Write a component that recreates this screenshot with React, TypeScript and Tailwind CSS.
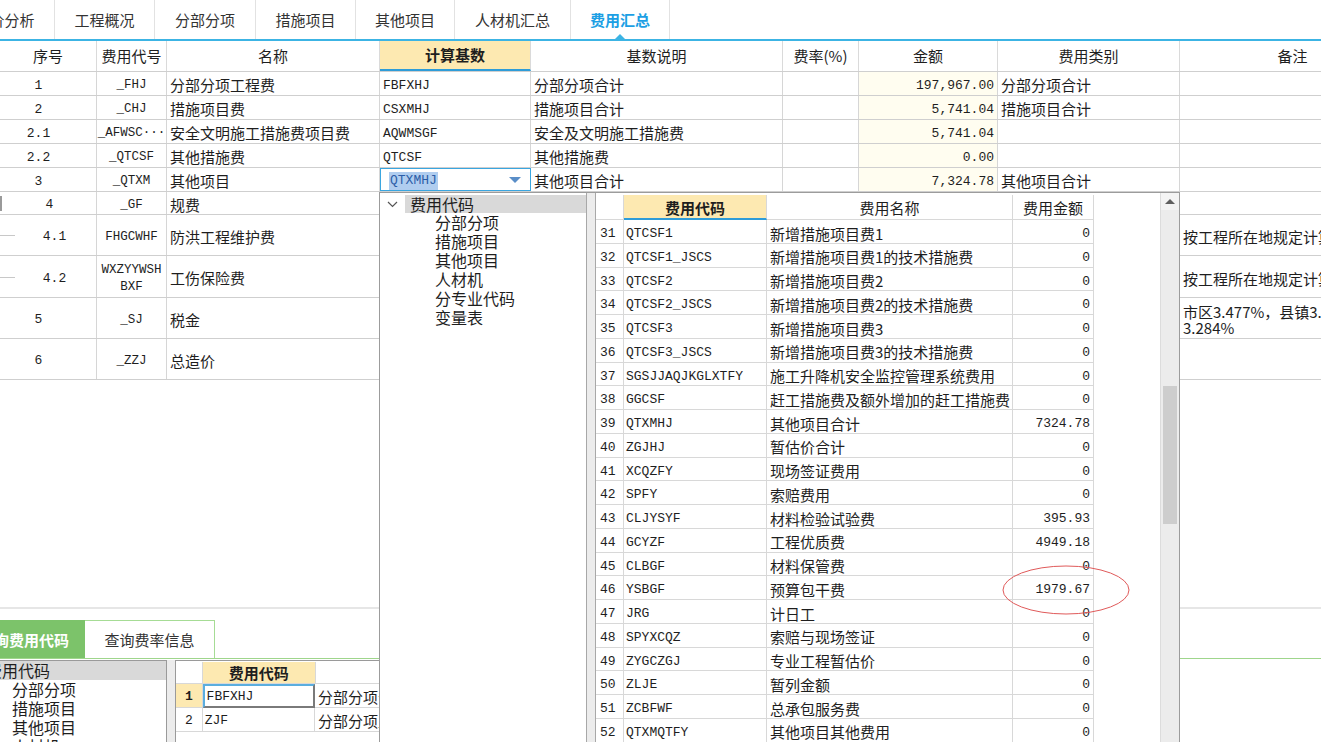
import React from 'react';

const CJK = "font-['Noto_Sans_CJK_SC',sans-serif]";
const MONO = "font-['Liberation_Mono','Noto_Sans_CJK_SC',monospace]";
// ref text sits a little low in its cells
const SHIFT = 'pt-[4px]';

const tabs = [
  { label: '造价分析', w: 'w-[100px] -ml-[45px]' },
  { label: '工程概况', w: 'w-[100px]' },
  { label: '分部分项', w: 'w-[101px]' },
  { label: '措施项目', w: 'w-[100px]' },
  { label: '其他项目', w: 'w-[99px]' },
  { label: '人材机汇总', w: 'w-[116px]' },
  { label: '费用汇总', w: 'w-[99px]', active: true },
];

const headCols = [
  { label: '序号', w: 'w-[97px]' },
  { label: '费用代号', w: 'w-[70px]' },
  { label: '名称', w: 'w-[213px]' },
  { label: '计算基数', w: 'w-[151px]', hl: true },
  { label: '基数说明', w: 'w-[252px]' },
  { label: '费率(%)', w: 'w-[76px]' },
  { label: '金额', w: 'w-[139px]' },
  { label: '费用类别', w: 'w-[182px]' },
  { label: '备注', w: 'w-[226px]' },
];

type MainRow = {
  no: string;
  noPad: string;
  code: string[];
  name: string;
  base?: string;
  desc?: string;
  amt?: string;
  cat?: string;
  note?: string[];
  h: string;
  tree?: 'v' | 'h';
  open?: boolean;
};

const mainRows: MainRow[] = [
  { no: '1', noPad: 'pr-[19px]', code: ['_FHJ'], name: '分部分项工程费', base: 'FBFXHJ', desc: '分部分项合计', amt: '197,967.00', cat: '分部分项合计', h: 'h-[24px]' },
  { no: '2', noPad: 'pr-[19px]', code: ['_CHJ'], name: '措施项目费', base: 'CSXMHJ', desc: '措施项目合计', amt: '5,741.04', cat: '措施项目合计', h: 'h-[24px]' },
  { no: '2.1', noPad: 'pr-[19px]', code: ['_AFWSC···'], name: '安全文明施工措施费项目费', base: 'AQWMSGF', desc: '安全及文明施工措施费', amt: '5,741.04', h: 'h-[24px]' },
  { no: '2.2', noPad: 'pr-[19px]', code: ['_QTCSF'], name: '其他措施费', base: 'QTCSF', desc: '其他措施费', amt: '0.00', h: 'h-[24px]' },
  { no: '3', noPad: 'pr-[19px]', code: ['_QTXM'], name: '其他项目', base: 'QTXMHJ', desc: '其他项目合计', amt: '7,324.78', cat: '其他项目合计', h: 'h-[24px]', open: true },
  { no: '4', noPad: 'pl-[3px]', code: ['_GF'], name: '规费', h: 'h-[23px]', tree: 'v' },
  { no: '4.1', noPad: 'pl-[13px]', code: ['FHGCWHF'], name: '防洪工程维护费', note: ['按工程所在地规定计算'], h: 'h-[41px]', tree: 'h' },
  { no: '4.2', noPad: 'pl-[13px]', code: ['WXZYYWSH', 'BXF'], name: '工伤保险费', note: ['按工程所在地规定计算'], h: 'h-[42px]', tree: 'h' },
  { no: '5', noPad: 'pr-[19px]', code: ['_SJ'], name: '税金', note: ['市区3.477%，县镇3.413%，其他', '3.284%'], h: 'h-[41px]' },
  { no: '6', noPad: 'pr-[19px]', code: ['_ZZJ'], name: '总造价', h: 'h-[41px]' },
];

const codeRows = [
  ['31', 'QTCSF1', '新增措施项目费1', '0'],
  ['32', 'QTCSF1_JSCS', '新增措施项目费1的技术措施费', '0'],
  ['33', 'QTCSF2', '新增措施项目费2', '0'],
  ['34', 'QTCSF2_JSCS', '新增措施项目费2的技术措施费', '0'],
  ['35', 'QTCSF3', '新增措施项目费3', '0'],
  ['36', 'QTCSF3_JSCS', '新增措施项目费3的技术措施费', '0'],
  ['37', 'SGSJJAQJKGLXTFY', '施工升降机安全监控管理系统费用', '0'],
  ['38', 'GGCSF', '赶工措施费及额外增加的赶工措施费', '0'],
  ['39', 'QTXMHJ', '其他项目合计', '7324.78'],
  ['40', 'ZGJHJ', '暂估价合计', '0'],
  ['41', 'XCQZFY', '现场签证费用', '0'],
  ['42', 'SPFY', '索赔费用', '0'],
  ['43', 'CLJYSYF', '材料检验试验费', '395.93'],
  ['44', 'GCYZF', '工程优质费', '4949.18'],
  ['45', 'CLBGF', '材料保管费', '0'],
  ['46', 'YSBGF', '预算包干费', '1979.67'],
  ['47', 'JRG', '计日工', '0'],
  ['48', 'SPYXCQZ', '索赔与现场签证', '0'],
  ['49', 'ZYGCZGJ', '专业工程暂估价', '0'],
  ['50', 'ZLJE', '暂列金额', '0'],
  ['51', 'ZCBFWF', '总承包服务费', '0'],
  ['52', 'QTXMQTFY', '其他项目其他费用', '0'],
];

const treeItems = ['分部分项', '措施项目', '其他项目', '人材机', '分专业代码', '变量表'];

function TopTabs() {
  return (
    <div className="flex h-[39px] bg-white">
      {tabs.map((t) => (
        <div
          key={t.label}
          className={`relative shrink-0 ${t.w} flex items-center justify-center pt-[1px] border-r border-[#e2e2e2] text-[15px] ${
            t.active ? 'text-[#1c9fe4] font-bold' : 'text-[#333]'
          }`}
        >
          {t.label}
          {t.active && (
            <span className="absolute bottom-0 left-1/2 -translate-x-1/2 w-0 h-0 border-l-[5px] border-r-[5px] border-b-[5px] border-l-transparent border-r-transparent border-b-[#3cb4e4]" />
          )}
        </div>
      ))}
    </div>
  );
}

function MainTable() {
  return (
    <div>
      <div className="flex h-[31px] border-b border-[#cfcfcf]">
        {headCols.map((c) => (
          <div
            key={c.label}
            className={`shrink-0 ${c.w} flex items-center justify-center border-r border-[#dadada] text-[15px] ${
              c.hl ? 'bg-[#fde9b1] font-bold border-b-2 border-b-[#2e9cd8]' : ''
            }`}
          >
            {c.label}
          </div>
        ))}
      </div>
      {mainRows.map((r) => (
        <div key={r.no} className={`flex ${r.h} border-b border-[#cfcfcf]`}>
          <div className={`relative shrink-0 w-[97px] flex items-center justify-center ${SHIFT} border-r border-[#d6d6d6] ${MONO} text-[13px] ${r.noPad}`}>
            {r.tree === 'v' && <span className="absolute left-0 top-[4px] h-[15px] w-[2px] bg-[#9a9a9a]" />}
            {r.tree === 'h' && <span className="absolute left-0 top-1/2 w-[15px] h-px bg-[#c8c8c8]" />}
            {r.no}
          </div>
          <div className={`shrink-0 w-[70px] flex flex-col items-center justify-center ${SHIFT} border-r border-[#d6d6d6] ${MONO} text-[12.5px] leading-[17px]`}>
            {r.code.map((c) => (
              <span key={c}>{c}</span>
            ))}
          </div>
          <div className={`shrink-0 w-[213px] flex items-center pl-[3px] ${SHIFT} border-r border-[#d6d6d6] text-[15px]`}>{r.name}</div>
          {r.open ? (
            <div className="shrink-0 w-[151px] flex items-center pl-[8px] pr-[9px] pt-[3px] border border-[#3aa6e0]">
              <span className={`${MONO} text-[13px] bg-[#b0cdef] text-[#2c5ea8] px-[1px] leading-[18px]`}>{r.base}</span>
              <span className="ml-auto -mt-[3px] w-0 h-0 border-l-[6px] border-r-[6px] border-t-[6px] border-l-transparent border-r-transparent border-t-[#5a8ec8]" />
            </div>
          ) : (
            <div className={`shrink-0 w-[151px] flex items-center pl-[3px] ${SHIFT} border-r border-[#d6d6d6] ${MONO} text-[13px]`}>{r.base}</div>
          )}
          <div className={`shrink-0 w-[252px] flex items-center pl-[3px] ${SHIFT} border-r border-[#d6d6d6] text-[15px]`}>{r.desc}</div>
          <div className="shrink-0 w-[76px] border-r border-[#d6d6d6]" />
          <div
            className={`shrink-0 w-[139px] flex items-center justify-end pr-[3px] ${SHIFT} border-r border-[#d6d6d6] ${MONO} text-[13px] ${
              r.amt ? 'bg-[#fffdf0]' : ''
            }`}
          >
            {r.amt}
          </div>
          <div className={`shrink-0 w-[182px] flex items-center pl-[3px] ${SHIFT} border-r border-[#d6d6d6] text-[15px]`}>{r.cat}</div>
          <div className={`shrink-0 w-[226px] flex flex-col justify-center pl-[3px] ${SHIFT} text-[15px] leading-[16px] whitespace-nowrap`}>
            {r.note?.map((n) => (
              <span key={n}>{n}</span>
            ))}
          </div>
        </div>
      ))}
    </div>
  );
}

function CodePopup() {
  return (
    <div className="absolute left-[379px] top-[192px] w-[801px] h-[560px] bg-white border border-[#9c9c9c] flex">
      {/* tree */}
      <div className="w-[207px] shrink-0 border-r border-[#a8a8a8] pt-[2px]">
        <div className="flex items-center h-[18px]">
          <span className="w-[25px] flex justify-center">
            <svg width="11" height="7" viewBox="0 0 11 7">
              <polyline points="1,1 5.5,5.5 10,1" fill="none" stroke="#555" strokeWidth="1.2" />
            </svg>
          </span>
          <span className="flex-1 h-full bg-[#d9d9d9] pl-[5px] text-[16px] leading-[18px]">费用代码</span>
        </div>
        {treeItems.map((t) => (
          <div key={t} className="pl-[55px] h-[19px] text-[16px] leading-[19px]">
            {t}
          </div>
        ))}
      </div>
      <div className="w-[8px] shrink-0 bg-[#ececec]" />
      {/* grid */}
      <div className="flex-1 flex border-l border-[#a8a8a8]">
        <div className="flex-1 pt-[2px]">
          <div className="flex h-[25px]">
            <div className="w-[28px] border-r border-b border-[#d8d8d8]" />
            <div className="w-[143px] flex items-center justify-center pt-[3px] bg-[#fde9b1] font-bold text-[15px] border-r border-[#d8d8d8] border-b-2 border-b-[#2e9cd8]">
              费用代码
            </div>
            <div className="w-[246px] flex items-center justify-center pt-[3px] text-[15px] border-r border-b border-[#d8d8d8]">费用名称</div>
            <div className="w-[81px] flex items-center justify-center pt-[3px] text-[15px] border-r border-b border-[#d8d8d8]">费用金额</div>
          </div>
          {codeRows.map(([n, code, name, amt]) => (
            <div key={n} className="flex h-[23.75px]">
              <div className={`w-[28px] flex items-center pl-[4px] pt-[5px] border-r border-b border-[#d8d8d8] ${MONO} text-[13px]`}>{n}</div>
              <div className={`w-[143px] flex items-center pl-[2px] pt-[5px] border-r border-b border-[#d8d8d8] ${MONO} text-[13px]`}>{code}</div>
              <div className="w-[246px] flex items-center pl-[3px] pt-[5px] border-r border-b border-[#d8d8d8] text-[15px] whitespace-nowrap">{name}</div>
              <div className={`w-[81px] flex items-center justify-end pr-[3px] pt-[5px] border-r border-b border-[#d8d8d8] ${MONO} text-[13px]`}>{amt}</div>
            </div>
          ))}
        </div>
        <div className="w-[19px] shrink-0 bg-[#ececec] border-l border-[#dcdcdc] flex flex-col items-center">
          <div className="w-full h-[17px] bg-[#f4f4f4] flex items-center justify-center">
            <span className="w-0 h-0 border-l-[5px] border-r-[5px] border-b-[5px] border-l-transparent border-r-transparent border-b-[#606060]" />
          </div>
          <div className="h-[176px]" />
          <div className="w-[14px] h-[138px] bg-[#cdcdcd]" />
        </div>
      </div>
    </div>
  );
}

function BottomPanel() {
  return (
    <div>
      <div className="h-[2px] bg-[#e6e6e6]" />
      <div className="h-[11px]" />
      <div className="flex h-[39px] border-b border-[#9fd68c]">
        <div className="w-[85px] shrink-0 bg-[#7cc36a] overflow-hidden flex items-center pt-[2px]">
          <span className="-ml-[21px] whitespace-nowrap text-white font-bold text-[15px]">查询费用代码</span>
        </div>
        <div className="w-[130px] shrink-0 border-t border-r border-[#a6dc95] flex items-center justify-center pt-[2px] text-[15px] text-[#333]">
          查询费率信息
        </div>
      </div>
      <div className="flex pt-[1px]">
        <div className="w-[167px] shrink-0 h-[90px] border-t border-r border-[#9a9a9a] overflow-hidden">
          <div className="h-[19px] bg-[#d9d9d9] text-[16px] leading-[19px] -ml-[14px] whitespace-nowrap">费用代码</div>
          {treeItems.slice(0, 4).map((t) => (
            <div key={t} className="pl-[12px] h-[19px] text-[16px] leading-[19px]">
              {t}
            </div>
          ))}
        </div>
        <div className="w-[8px] shrink-0 bg-[#ececec]" />
        <div className="w-[220px] shrink-0 border-t border-l border-[#9a9a9a] pt-[1px]">
          <div className="flex h-[22px]">
            <div className="w-[27px] border-r border-b border-[#d8d8d8]" />
            <div className="w-[114px] flex items-center justify-center pt-[2px] bg-[#fde9b1] font-bold text-[15px] border-r border-b border-[#d8d8d8]">
              费用代码
            </div>
            <div className="w-[80px] border-b border-[#d8d8d8]" />
          </div>
          <div className="flex h-[24px]">
            <div className={`w-[27px] flex items-center justify-center pt-[3px] bg-[#fde9b1] font-bold border-r border-b border-[#d8d8d8] ${MONO} text-[13px]`}>1</div>
            <div className={`w-[114px] flex items-center pl-[2px] pt-[2px] border-2 border-[#5aaedf] border-r-[#7a7a7a] border-b-[#7a7a7a] ${MONO} text-[13px]`}>FBFXHJ</div>
            <div className="w-[80px] flex items-center pl-[3px] pt-[3px] border-b border-[#d8d8d8] text-[15px] whitespace-nowrap">分部分项合计</div>
          </div>
          <div className="flex h-[24px]">
            <div className={`w-[27px] flex items-center justify-center pt-[3px] border-r border-b border-[#d8d8d8] ${MONO} text-[13px]`}>2</div>
            <div className={`w-[114px] flex items-center pl-[2px] pt-[3px] border-r border-b border-[#d8d8d8] ${MONO} text-[13px]`}>ZJF</div>
            <div className="w-[80px] flex items-center pl-[3px] pt-[3px] border-b border-[#d8d8d8] text-[15px] whitespace-nowrap">分部分项工程费</div>
          </div>
        </div>
      </div>
    </div>
  );
}

export default function App() {
  return (
    <div className={`relative w-[1321px] h-[742px] overflow-hidden bg-white text-[#1e1e1e] ${CJK}`}>
      <TopTabs />
      <div className="h-[2px] bg-[#3cb4e4]" />
      <MainTable />
      <div className="h-[227px]" />
      <BottomPanel />
      <CodePopup />
      {/* red mark round 1979.67 */}
      <svg className="absolute left-[1002px] top-[565px]" width="128" height="50" viewBox="0 0 128 50">
        <ellipse cx="64" cy="25" rx="63" ry="24" fill="none" stroke="#e05a5a" strokeWidth="1" />
      </svg>
    </div>
  );
}
